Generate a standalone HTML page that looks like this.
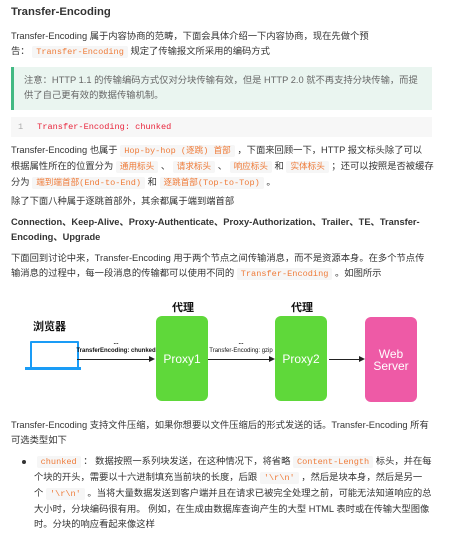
<!DOCTYPE html>
<html><head><meta charset="utf-8"><style>
*{margin:0;padding:0;box-sizing:border-box}
body{width:452px;height:535px;background:#fff;font-family:"Liberation Sans","Noto Sans CJK SC",sans-serif;color:#333;font-size:9.3px;position:relative;overflow:hidden}
.a{position:absolute;left:11px;width:440px;line-height:15px;white-space:nowrap}
code{font-family:"Liberation Mono","Noto Sans CJK SC",monospace;color:#ef7c3a;background:#f6f6f6;padding:1px 4px;border-radius:2px;font-size:8.6px}
h1{position:absolute;left:11px;top:6px;font-size:11.3px;font-weight:bold;color:#333}
.note{position:absolute;left:11px;top:67px;width:421px;height:43px;background:#eaf5f0;border-left:3px solid #42b983;padding:6px 0 0 10px;color:#666;line-height:15px;white-space:nowrap}
.code{position:absolute;left:11px;top:117px;width:421px;height:20px;background:#f7f7f7;font-family:"Liberation Mono",monospace;font-size:8.6px;line-height:20px;padding-left:7px;color:#aaa}
.code span{color:#e8253c;margin-left:14px}
.box{position:absolute;border-radius:6px;color:#fff;font-size:12px;text-align:center;display:flex;align-items:center;justify-content:center;line-height:12px}
.lab{position:absolute;font-size:11px;font-weight:bold;color:#111}
.al{position:absolute;font-size:6px;color:#111;text-align:center;font-weight:bold;white-space:nowrap}
.ln{position:absolute;height:1px;background:#222;top:359px}
.ar{position:absolute;top:356px;width:0;height:0;border-left:6px solid #222;border-top:3px solid transparent;border-bottom:3px solid transparent}
</style></head><body>
<h1>Transfer-Encoding</h1>
<div class="a" style="top:29px">Transfer-Encoding 属于内容协商的范畴，下面会具体介绍一下内容协商，现在先做个预<br>告： <code>Transfer-Encoding</code> 规定了传输报文所采用的编码方式</div>
<div class="note">注意：HTTP 1.1 的传输编码方式仅对分块传输有效，但是 HTTP 2.0 就不再支持分块传输，而提<br>供了自己更有效的数据传输机制。</div>
<div class="code">1<span>Transfer-Encoding: chunked</span></div>
<div class="a" style="top:143px">Transfer-Encoding 也属于 <code>Hop-by-hop (逐跳) 首部</code> ，下面来回顾一下，HTTP 报文标头除了可以<br>根据属性所在的位置分为 <code>通用标头</code> 、 <code>请求标头</code> 、 <code>响应标头</code> 和 <code>实体标头</code> ；还可以按照是否被缓存<br>分为 <code>端到端首部(End-to-End)</code> 和 <code>逐跳首部(Top-to-Top)</code> 。</div>
<div class="a" style="top:194px">除了下面八种属于逐跳首部外，其余都属于端到端首部</div>
<div class="a" style="top:215px;font-weight:bold">Connection、Keep-Alive、Proxy-Authenticate、Proxy-Authorization、Trailer、TE、Transfer-<br>Encoding、Upgrade</div>
<div class="a" style="top:251px">下面回到讨论中来，Transfer-Encoding 用于两个节点之间传输消息，而不是资源本身。在多个节点传<br>输消息的过程中，每一段消息的传输都可以使用不同的 <code>Transfer-Encoding</code> 。如图所示</div>

<div class="lab" style="left:172px;top:299px">代理</div>
<div class="lab" style="left:291px;top:299px">代理</div>
<div class="lab" style="left:33px;top:318px">浏览器</div>
<div style="position:absolute;left:30px;top:341px;width:49px;height:28px;border:2px solid #1a9cf6;border-radius:1px"></div>
<div style="position:absolute;left:25px;top:367px;width:56px;height:3px;background:#1a9cf6"></div>
<div class="box" style="left:156px;top:316px;width:52px;height:85px;background:#5fd83a">Proxy1</div>
<div class="box" style="left:275px;top:316px;width:52px;height:85px;background:#5fd83a">Proxy2</div>
<div class="box" style="left:365px;top:317px;width:52px;height:85px;background:#ee5aa6">Web<br>Server</div>
<div class="ln" style="left:77px;width:72px"></div><div class="ar" style="left:149px"></div>
<div class="ln" style="left:208px;width:61px"></div><div class="ar" style="left:269px"></div>
<div class="ln" style="left:329px;width:30px"></div><div class="ar" style="left:359px"></div>
<div class="al" style="left:75px;width:82px;top:340px">...</div>
<div class="al" style="left:75px;width:82px;top:348px">TransferEncoding: chunked</div>
<div class="al" style="left:206px;width:70px;top:340px">...</div>
<div class="al" style="left:206px;width:70px;top:348px;font-weight:normal">Transfer-Encoding: gzip</div>

<div class="a" style="top:418px">Transfer-Encoding 支持文件压缩，如果你想要以文件压缩后的形式发送的话。Transfer-Encoding 所有<br>可选类型如下</div>
<div style="position:absolute;left:22px;top:460px;width:4px;height:4px;border-radius:50%;background:#333"></div>
<div class="a" style="left:34px;top:454px;width:410px">&nbsp;<code>chunked</code> ： 数据按照一系列块发送，在这种情况下，将省略 <code>Content-Length</code> 标头，并在每<br>个块的开头，需要以十六进制填充当前块的长度，后跟 <code>'\r\n'</code> ，然后是块本身，然后是另一<br>个 <code>'\r\n'</code> 。当将大量数据发送到客户端并且在请求已被完全处理之前，可能无法知道响应的总<br>大小时，分块编码很有用。 例如，在生成由数据库查询产生的大型 HTML 表时或在传输大型图像<br>时。分块的响应看起来像这样</div>
</body></html>
